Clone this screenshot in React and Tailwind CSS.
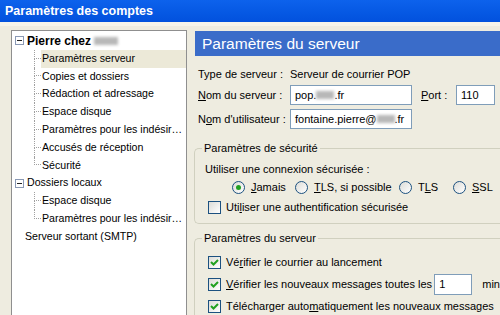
import React from 'react';

const font = { fontFamily: '"Liberation Sans", Arial, sans-serif' };

function Blur({ w }) {
  return <span className={`inline-block h-[8px] bg-[#b8b8b8] blur-[1.5px] align-middle ${w}`} />;
}

function MinusBox() {
  return (
    <span className="flex h-[9px] w-[9px] items-center justify-center border border-[#8a99b4] bg-white">
      <span className="h-px w-[5px] bg-[#222]" />
    </span>
  );
}

function TreeChild({ label, last, selected }) {
  return (
    <div className="flex h-[17.8px] items-stretch">
      <div className="ml-[22px] flex w-[7px] flex-col">
        <div className="h-1/2 border-b border-l border-dotted border-[#a0a0a0]" />
        <div className={`h-1/2 ${last ? '' : 'border-l border-dotted border-[#a0a0a0]'}`} />
      </div>
      <div className={`flex flex-1 items-center pl-[1px] ${selected ? 'bg-[#ece9d8]' : ''}`}>{label}</div>
    </div>
  );
}

function TreeTop({ children, bold }) {
  return (
    <div className={`flex h-[17.8px] items-center gap-[3px] pl-[3px] ${bold ? 'font-bold text-[12px]' : ''}`}>
      <MinusBox />
      {children}
    </div>
  );
}

function Check() {
  return (
    <span className="flex h-[13px] w-[13px] shrink-0 items-center justify-center border border-[#1c5180] bg-gradient-to-br from-[#dcdcd7] to-white">
      <svg width="9" height="9" viewBox="0 0 9 9">
        <path d="M1 4 L3.5 6.5 L8 2" fill="none" stroke="#21a121" strokeWidth="2" />
      </svg>
    </span>
  );
}

function EmptyCheck() {
  return <span className="h-[13px] w-[13px] shrink-0 border border-[#1c5180] bg-gradient-to-br from-[#dcdcd7] to-white" />;
}

function Radio({ on }) {
  return (
    <span className="flex h-[13px] w-[13px] shrink-0 items-center justify-center rounded-full border border-[#1c5180] bg-gradient-to-br from-[#dcdcd7] to-white">
      {on && <span className="h-[5px] w-[5px] rounded-full bg-[#21a121]" />}
    </span>
  );
}

function Field({ children, className }) {
  return (
    <div className={`flex h-[20px] items-center border border-[#7f9db9] bg-white pl-[4px] ${className}`}>{children}</div>
  );
}

function Group({ title, children, className }) {
  return (
    <div className={`relative rounded-l-[5px] border border-r-0 border-[#d0d0bf] ${className}`}>
      <span className="absolute left-[7px] top-[-8px] bg-[#eeece0] px-[2px] leading-[14px]">{title}</span>
      {children}
    </div>
  );
}

export default function App() {
  return (
    <div className="h-[315px] w-[500px] overflow-hidden whitespace-nowrap bg-[#eeece0] text-[11px] text-black" style={font}>
      {/* title bar */}
      <div className="flex h-[22px] items-center bg-gradient-to-b from-[#0d62ec] to-[#0251dd] pl-[5px] text-[12.5px] font-bold text-white">
        Paramètres des comptes
      </div>
      <div className="h-[4px] bg-[#f6f4ea]" />

      <div className="flex pl-[11px] pt-[4px]">
        {/* tree */}
        <div className="h-[300px] w-[176px] shrink-0 overflow-hidden border border-[#8f8f8f] bg-white pt-px text-[10.6px]">
          <TreeTop bold>
            Pierre chez <Blur w="w-[24px]" />
          </TreeTop>
          <TreeChild label="Paramètres serveur" selected />
          <TreeChild label="Copies et dossiers" />
          <TreeChild label="Rédaction et adressage" />
          <TreeChild label="Espace disque" />
          <TreeChild label="Paramètres pour les indésir…" />
          <TreeChild label="Accusés de réception" />
          <TreeChild label="Sécurité" last />
          <TreeTop>Dossiers locaux</TreeTop>
          <TreeChild label="Espace disque" />
          <TreeChild label="Paramètres pour les indésir…" last />
          <div className="flex h-[17.8px] items-center pl-[13px]">Serveur sortant (SMTP)</div>
        </div>

        {/* right panel */}
        <div className="ml-[8px] min-w-0 flex-1 pt-[1px]">
          <div className="flex h-[25px] items-center bg-[#3a6cc9] pl-[7px] text-[15.5px] text-white">
            Paramètres du serveur
          </div>

          <div className="pl-[3px] pt-[10px]">
            <div className="flex h-[17px] items-center">
              <span className="w-[92px]">Type de serveur :</span>
              <span>Serveur de courrier POP</span>
            </div>
            <div className="mt-[2px] flex items-center">
              <span className="w-[92px]"><u>N</u>om du serveur :</span>
              <Field className="w-[122px]">pop.<Blur w="w-[18px]" />.fr</Field>
              <span className="ml-[9px] w-[35px]"><u>P</u>ort :</span>
              <Field className="w-[39px]">110</Field>
            </div>
            <div className="mt-[4px] flex items-center">
              <span className="w-[92px]">N<u>o</u>m d'utilisateur :</span>
              <Field className="w-[122px]">fontaine.pierre@<Blur w="w-[18px]" />.fr</Field>
            </div>
          </div>

          <Group title="Paramètres de sécurité" className="ml-[-1px] mt-[19px] h-[76px] pl-[10px] pt-[12px]">
            <div className="flex h-[16px] items-center">Utiliser une connexion sécurisée :</div>
            <div className="mt-[2px] flex h-[16px] items-center pl-[27px]">
              <Radio on />
              <span className="ml-[6px] w-[44px]"><u>J</u>amais</span>
              <Radio />
              <span className="ml-[6px] w-[85px]"><u>T</u>LS, si possible</span>
              <Radio />
              <span className="ml-[6px] w-[35px]">T<u>L</u>S</span>
              <Radio />
              <span className="ml-[6px]"><u>S</u>SL</span>
            </div>
            <div className="mt-[4px] flex h-[16px] items-center gap-[5px] pl-[3px]">
              <EmptyCheck />
              <span>Uti<u>l</u>iser une authentification sécurisée</span>
            </div>
          </Group>

          <Group title="Paramètres du serveur" className="ml-[-1px] mt-[14px] h-[90px] pl-[13px] pt-[15px]">
            <div className="flex h-[16px] items-center gap-[5px]">
              <Check />
              <span>Vé<u>r</u>ifier le courrier au lancement</span>
            </div>
            <div className="mt-[3px] flex h-[22px] items-center">
              <Check />
              <span className="ml-[5px] w-[209px]"><u>V</u>érifier les nouveaux messages toutes les</span>
              <Field className="h-[21px] w-[38px] text-[11px]">1</Field>
              <span className="ml-[10px]">min</span>
            </div>
            <div className="mt-[3px] flex h-[16px] items-center gap-[5px]">
              <Check />
              <span>Télécharger auto<u>m</u>atiquement les nouveaux messages</span>
            </div>
          </Group>
        </div>
      </div>
    </div>
  );
}
